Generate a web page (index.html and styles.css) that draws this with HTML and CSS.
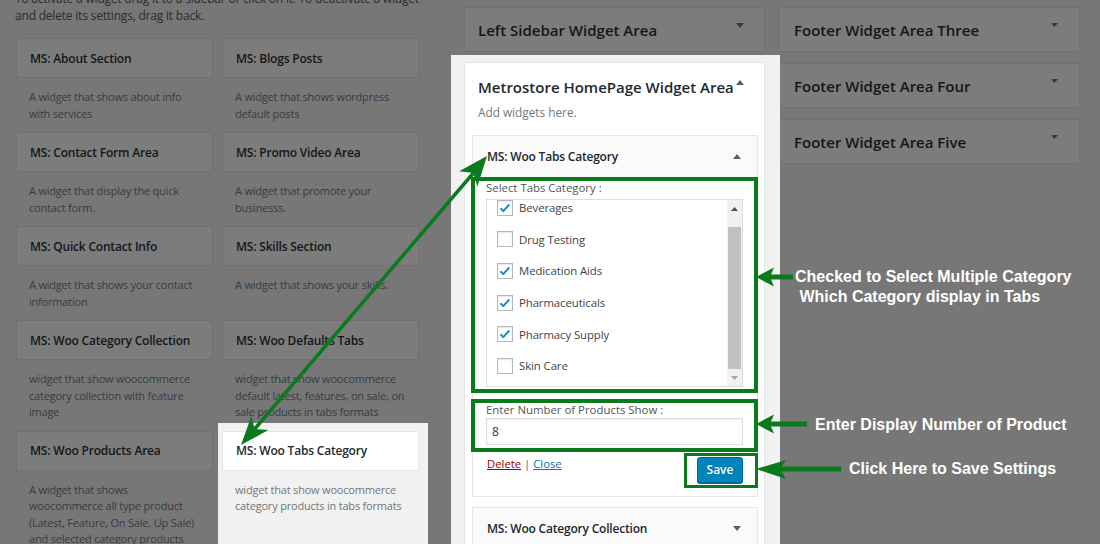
FILE: index.html
```html
<!DOCTYPE html>
<html lang="en">
<head>
<meta charset="utf-8">
<title>Widgets</title>
<link rel="stylesheet" href="styles.css">
</head>
<body>
<div class="screen">
  <div class="col-left">
    <p class="intro">To activate a widget drag it to a sidebar or click on it. To deactivate a widget<br>and delete its settings, drag it back.</p>
    <div class="widget-grid">
      <div class="wcell">
        <div class="wbox"><h3>MS: About Section</h3></div>
        <p class="wdesc">A widget that shows about info<br>with services</p>
      </div>
      <div class="wcell">
        <div class="wbox"><h3>MS: Blogs Posts</h3></div>
        <p class="wdesc">A widget that shows wordpress<br>default posts</p>
      </div>
      <div class="wcell">
        <div class="wbox"><h3>MS: Contact Form Area</h3></div>
        <p class="wdesc">A widget that display the quick<br>contact form.</p>
      </div>
      <div class="wcell">
        <div class="wbox"><h3>MS: Promo Video Area</h3></div>
        <p class="wdesc">A widget that promote your<br>businesss.</p>
      </div>
      <div class="wcell">
        <div class="wbox"><h3>MS: Quick Contact Info</h3></div>
        <p class="wdesc">A widget that shows your contact<br>information</p>
      </div>
      <div class="wcell">
        <div class="wbox"><h3>MS: Skills Section</h3></div>
        <p class="wdesc">A widget that shows your skills.</p>
      </div>
      <div class="wcell">
        <div class="wbox"><h3>MS: Woo Category Collection</h3></div>
        <p class="wdesc">widget that show woocommerce<br>category collection with feature<br>image</p>
      </div>
      <div class="wcell">
        <div class="wbox"><h3>MS: Woo Defaults Tabs</h3></div>
        <p class="wdesc">widget that show woocommerce<br>default latest, features, on sale, on<br>sale products in tabs formats</p>
      </div>
      <div class="wcell">
        <div class="wbox"><h3>MS: Woo Products Area</h3></div>
        <p class="wdesc">A widget that shows<br>woocommerce all type product<br>(Latest, Feature, On Sale, Up Sale)<br>and selected category products</p>
      </div>
      <div class="wcell spot">
        <div class="wbox"><h3>MS: Woo Tabs Category</h3></div>
        <p class="wdesc">widget that show woocommerce<br>category products in tabs formats</p>
      </div>
    </div>
  </div>

  <div class="col-mid">
    <div class="sbox">
      <h2>Left Sidebar Widget Area</h2>
      <svg class="tri" width="8" height="5" viewBox="0 0 8 5"><polygon points="0,0 8,0 4,5"/></svg>
    </div>
    <div class="spotlight">
      <div class="panel">
        <div class="panel-head">
          <h2>Metrostore HomePage Widget Area</h2>
          <svg class="tri" width="8" height="5" viewBox="0 0 8 5"><polygon points="0,5 8,5 4,0"/></svg>
        </div>
        <p class="panel-desc">Add widgets here.</p>

        <div class="widget">
          <div class="widget-top">
            <h3>MS: Woo Tabs Category</h3>
            <svg class="tri" width="8" height="5" viewBox="0 0 8 5"><polygon points="0,5 8,5 4,0"/></svg>
          </div>
          <div class="widget-inside">
            <div class="mark mark-cats">
              <div class="flabel">Select Tabs Category :</div>
              <div class="checklist">
                <div class="cats-view">
                  <ul class="cats">
                    <li><span class="cb"><svg width="14" height="14" viewBox="0 0 14 14"><path d="M2.5 7.2l2.8 2.9 6-6.6"/></svg></span>Beverages</li>
                    <li><span class="cb"></span>Drug Testing</li>
                    <li><span class="cb"><svg width="14" height="14" viewBox="0 0 14 14"><path d="M2.5 7.2l2.8 2.9 6-6.6"/></svg></span>Medication Aids</li>
                    <li><span class="cb"><svg width="14" height="14" viewBox="0 0 14 14"><path d="M2.5 7.2l2.8 2.9 6-6.6"/></svg></span>Pharmaceuticals</li>
                    <li><span class="cb"><svg width="14" height="14" viewBox="0 0 14 14"><path d="M2.5 7.2l2.8 2.9 6-6.6"/></svg></span>Pharmacy Supply</li>
                    <li><span class="cb"></span>Skin Care</li>
                  </ul>
                </div>
                <div class="sbar">
                  <span class="sb-btn"><svg width="7" height="4" viewBox="0 0 7 4"><polygon points="0,4 7,4 3.5,0" fill="#505050"/></svg></span>
                  <span class="sb-gap"></span>
                  <span class="sb-thumb"></span>
                  <span class="sb-btn"><svg width="7" height="4" viewBox="0 0 7 4"><polygon points="0,0 7,0 3.5,4" fill="#a3a3a3"/></svg></span>
                </div>
              </div>
            </div>
            <div class="mark mark-num">
              <div class="flabel">Enter Number of Products Show :</div>
              <div class="input">8</div>
            </div>
            <div class="actions">
              <div class="links"><a class="del">Delete</a> <span class="sep">|</span> <a class="cls">Close</a></div>
              <div class="mark mark-save"><span class="save">Save</span></div>
            </div>
          </div>
        </div>

        <div class="widget closed">
          <div class="widget-top">
            <h3>MS: Woo Category Collection</h3>
            <svg class="tri" width="8" height="5" viewBox="0 0 8 5"><polygon points="0,0 8,0 4,5"/></svg>
          </div>
        </div>
      </div>
    </div>
  </div>

  <div class="col-right">
    <div class="sbox">
      <h2>Footer Widget Area Three</h2>
      <svg class="tri" width="7" height="4" viewBox="0 0 7 4"><polygon points="0,0 7,0 3.5,4"/></svg>
    </div>
    <div class="sbox">
      <h2>Footer Widget Area Four</h2>
      <svg class="tri" width="7" height="4" viewBox="0 0 7 4"><polygon points="0,0 7,0 3.5,4"/></svg>
    </div>
    <div class="sbox">
      <h2>Footer Widget Area Five</h2>
      <svg class="tri" width="7" height="4" viewBox="0 0 7 4"><polygon points="0,0 7,0 3.5,4"/></svg>
    </div>
  </div>

  <svg class="annot" width="1100" height="544" viewBox="0 0 1100 544">
    <g fill="#0b7a1c" stroke="none">
      <line x1="473.4" y1="173" x2="254.6" y2="429" stroke="#0b7a1c" stroke-width="3.5"/>
      <polygon points="487,156 477.3,186.8 473.4,173 459.1,171.2"/>
      <polygon points="241,445 251.4,415.9 254.6,429 268.2,430.1"/>
      <rect x="768" y="274.5" width="25" height="5"/>
      <polygon points="756,277 774,267.5 770,277 774,286.5"/>
      <rect x="768" y="421.5" width="39" height="5"/>
      <polygon points="756,424 774,414.5 770,424 774,433.5"/>
      <rect x="775" y="466.5" width="66" height="5"/>
      <polygon points="756,469 786,460 780,469 786,479"/>
    </g>
  </svg>
  <div class="note note1">Checked to Select Multiple Category<br>&nbsp;Which Category display in Tabs</div>
  <div class="note note2">Enter Display Number of Product</div>
  <div class="note note3">Click Here to Save Settings</div>
</div>
</body>
</html>
```

FILE: styles.css
```css
* { box-sizing: border-box; }
html, body { margin: 0; padding: 0; }
body {
  width: 1100px;
  height: 544px;
  overflow: hidden;
  background: #777777;
  font-family: "Open Sans", "Noto Sans", sans-serif;
}
.screen {
  position: relative;
  display: flex;
  width: 1100px;
  height: 544px;
  overflow: hidden;
}

/* ---------- left column (dimmed widget list) ---------- */
.col-left {
  flex: none;
  width: 420px;
  padding-left: 15px;
}
.intro {
  margin: -10px 0 0;
  font-size: 12px;
  letter-spacing: -0.2px;
  line-height: 17px;
  color: #2a2b2c;
  white-space: nowrap;
}
.widget-grid {
  display: grid;
  grid-template-columns: 197px 197px;
  column-gap: 9px;
  margin: 14px 0 0 1px;
}
.wbox {
  height: 40px;
  display: flex;
  align-items: center;
  padding: 0 13px;
  background: #7c7c7c;
  border: 1px solid #707070;
}
.wbox h3 {
  margin: 0;
  font-size: 12px;
  letter-spacing: -0.2px;
  font-weight: 600;
  color: #141618;
  white-space: nowrap;
}
.wdesc {
  margin: 0;
  padding: 11px 8px 10px 13px;
  font-size: 11px;
  letter-spacing: -0.2px;
  line-height: 16.5px;
  color: #393b3e;
  white-space: nowrap;
}
.wcell.spot {
  margin: -8px -9px 0 -4px;
  padding: 8px 9px 0 4px;
  background: #f1f1f1;
}
.wcell.spot .wbox {
  background: #ffffff;
  border-color: #e5e5e5;
}
.wcell.spot .wbox h3 { color: #23282d; }
.wcell.spot .wdesc { color: #72777c; }

/* ---------- sidebar boxes ---------- */
.sbox {
  flex: none;
  height: 45px;
  display: flex;
  justify-content: space-between;
  background: #7c7c7c;
  border: 1px solid #707070;
}
.sbox h2 {
  margin: 0;
  align-self: center;
  font-size: 15px;
  font-weight: 600;
  color: #141618;
  white-space: nowrap;
}
.sbox .tri { fill: #393b3e; margin-top: 15px; }

/* ---------- middle column ---------- */
.col-mid {
  flex: none;
  width: 301px;
  margin-left: 44px;
  display: flex;
  flex-direction: column;
}
.col-mid .sbox {
  margin-top: 7px;
  padding: 0 20px 0 13px;
}
.spotlight {
  position: relative;
  z-index: 1;
  flex: 1 0 auto;
  margin: 3px -15px 0 -13px;
  padding: 7px 15px 0 13px;
  background: #f1f1f1;
}
.panel {
  background: #ffffff;
  border: 1px solid #e5e5e5;
  padding-bottom: 40px;
}
.panel-head {
  display: flex;
  justify-content: space-between;
  align-items: flex-start;
  padding: 14px 20px 0 13px;
}
.panel-head h2 {
  margin: 0;
  font-size: 15px;
  line-height: 20px;
  font-weight: 600;
  color: #23282d;
  white-space: nowrap;
}
.tri { display: block; flex: none; }
.panel-head .tri { fill: #555d66; margin-top: 3px; }
.panel-desc {
  margin: 6px 0 14px;
  padding-left: 13px;
  font-size: 11.8px;
  line-height: 18px;
  color: #72777c;
}

/* ---------- widget ---------- */
.widget {
  margin: 0 6px 0 7px;
  border: 1px solid #e5e5e5;
  background: #ffffff;
}
.widget.closed { margin-top: 10px; }
.widget-top {
  height: 41px;
  display: flex;
  align-items: center;
  justify-content: space-between;
  padding: 0 16px 0 14px;
  background: #fafafa;
}
.widget-top h3 {
  margin: 0;
  font-size: 12px;
  letter-spacing: -0.2px;
  font-weight: 600;
  color: #23282d;
  white-space: nowrap;
}
.widget-top .tri { fill: #555d66; }
.widget-inside {
  padding: 0 0 8px;
}
.mark {
  border: 4px solid #0b7a1c;
}
.mark-cats {
  margin: 0 -1px 0 -2px;
  padding: 0 11px 2px 11px;
}
.flabel {
  font-size: 11.4px;
  line-height: 14px;
  color: #555555;
  white-space: nowrap;
}
.checklist {
  margin-top: 4px;
  height: 188px;
  display: flex;
  border: 1px solid #dddddd;
  background: #ffffff;
  overflow: hidden;
}
.cats-view {
  flex: 1;
  overflow: hidden;
}
.cats {
  list-style: none;
  margin: -8px 0 0;
  padding: 0;
}
.cats li {
  height: 31.6px;
  display: flex;
  align-items: center;
  padding-left: 10px;
  font-size: 11.4px;
  letter-spacing: -0.1px;
  color: #444444;
  white-space: nowrap;
}
.cb {
  width: 16px;
  height: 16px;
  margin-right: 6px;
  border: 1px solid #b4b9be;
  background: #ffffff;
  box-shadow: inset 0 1px 2px rgba(0, 0, 0, 0.1);
  display: flex;
  align-items: center;
  justify-content: center;
}
.cb svg path {
  fill: none;
  stroke: #1e8cbe;
  stroke-width: 2;
}
.sbar {
  flex: none;
  width: 15px;
  display: flex;
  flex-direction: column;
  background: #f1f1f1;
}
.sb-btn {
  height: 17px;
  display: flex;
  align-items: center;
  justify-content: center;
}
.sb-gap { height: 10px; }
.sb-thumb {
  height: 142px;
  margin: 0 1px;
  background: #c1c1c1;
}
.mark-num {
  margin: 6px -1px 0 -2px;
  padding: 0 11px 3px 11px;
}
.input {
  margin-top: 1px;
  height: 27px;
  padding-left: 5px;
  border: 1px solid #dddddd;
  box-shadow: inset 0 1px 2px rgba(0, 0, 0, 0.07);
  font-size: 12px;
  line-height: 25px;
  color: #32373c;
}
.actions {
  margin: 1px -1px 0 0;
  display: flex;
  justify-content: space-between;
  align-items: flex-start;
  padding-left: 14px;
}
.links {
  padding-top: 2px;
  font-size: 11.3px;
  line-height: 18px;
  color: #555555;
}
.links a { text-decoration: underline; }
.links .del { color: #a00000; }
.links .cls { color: #0073aa; }
.links .sep { color: #555d66; }
.mark-save {
  border-width: 3px;
  padding: 1px 12px 2px 10px;
}
.save {
  display: block;
  width: 46px;
  height: 26px;
  border: 1px solid #006799;
  border-radius: 3px;
  background: #0085ba;
  box-shadow: 0 1px 0 #006799;
  color: #ffffff;
  font-size: 12px;
  font-weight: 600;
  line-height: 24px;
  text-align: center;
  text-shadow: 0 -1px 1px #006799;
}

/* ---------- right column ---------- */
.col-right {
  flex: none;
  width: 302px;
  margin-left: 13px;
}
.col-right .sbox {
  margin-top: 11px;
  padding: 0 21px 0 15px;
}
.col-right .sbox:first-child { margin-top: 7px; }

/* ---------- annotations ---------- */
.annot {
  position: absolute;
  left: 0;
  top: 0;
  z-index: 5;
  pointer-events: none;
}
.note {
  position: absolute;
  z-index: 6;
  font-family: "Liberation Sans", Arial, sans-serif;
  font-weight: 700;
  font-size: 16px;
  line-height: 20px;
  color: #ffffff;
  white-space: nowrap;
}
.note1 { left: 795px; top: 267px; }
.note2 { left: 815px; top: 415px; }
.note3 { left: 849px; top: 459px; }
```
